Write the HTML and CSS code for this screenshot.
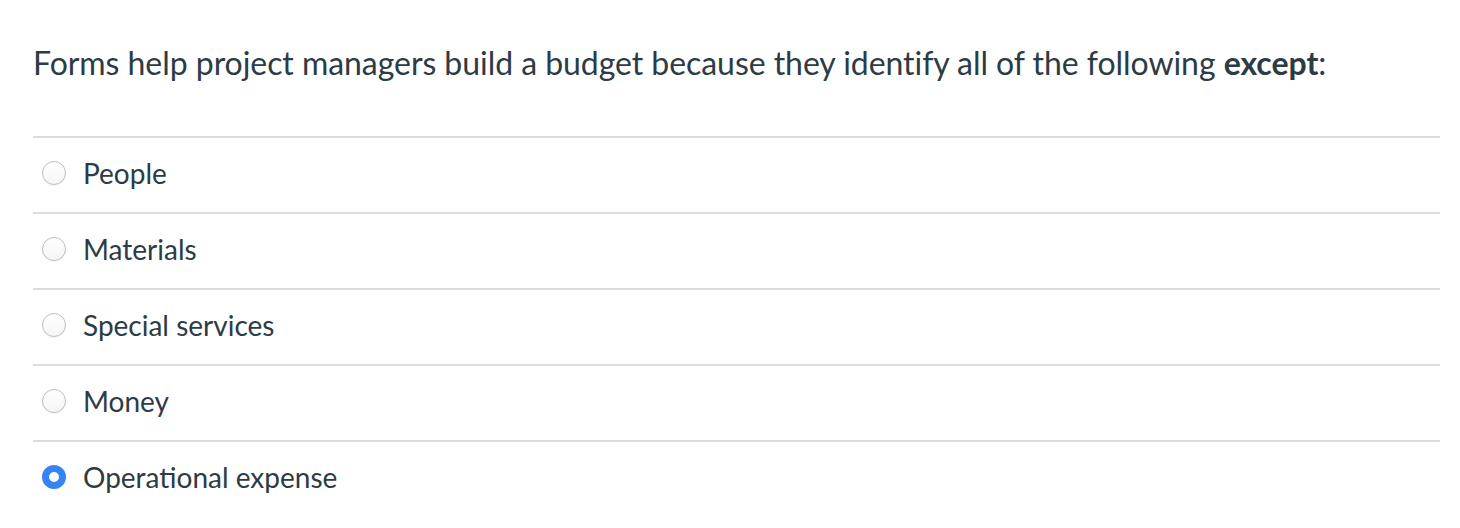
FILE: index.html
```html
<!DOCTYPE html>
<html>
<head>
<meta charset="utf-8">
<link rel="stylesheet" href="styles.css">
</head>
<body>
<div class="quiz">
  <p class="question">Forms help project managers build a budget because they identify all of the following <strong>except</strong>:</p>
  <ul class="answers">
    <li class="answer"><span class="radio"></span><span class="label">People</span></li>
    <li class="answer"><span class="radio"></span><span class="label">Materials</span></li>
    <li class="answer"><span class="radio"></span><span class="label">Special services</span></li>
    <li class="answer"><span class="radio"></span><span class="label">Money</span></li>
    <li class="answer"><span class="radio checked"></span><span class="label">Operational expense</span></li>
  </ul>
</div>
</body>
</html>
```
FILE: styles.css
```css
html, body {
  margin: 0;
  padding: 0;
  background: #fff;
}
body {
  font-family: Lato, "Open Sans", sans-serif;
  color: #2d3b45;
}
.quiz {
  padding: 44px 20px 0 33px;
}
.question {
  margin: 0 0 54px 0;
  font-size: 32px;
  line-height: 38px;
  font-weight: 400;
  letter-spacing: -0.05px;
}
.question strong {
  font-weight: 700;
}
.answers {
  list-style: none;
  margin: 0;
  padding: 0;
}
.answer {
  border-top: 2px solid #dcdcdc;
  height: 70px;
  box-sizing: content-box;
  display: flex;
  align-items: center;
  padding-bottom: 4px;
}
.radio {
  width: 24px;
  height: 24px;
  margin-left: 9px;
  margin-right: 17px;
  border-radius: 50%;
  box-sizing: border-box;
  border: 1px solid #bdbdbd;
  background: linear-gradient(#ffffff, #f5f5f5);
  box-shadow: 0 1px 1px rgba(0,0,0,0.05);
  flex-shrink: 0;
}
.radio.checked {
  border: 7px solid #3584f3;
  background: #fff;
  box-shadow: none;
}
.label {
  font-size: 28px;
  line-height: 34px;
}
```
